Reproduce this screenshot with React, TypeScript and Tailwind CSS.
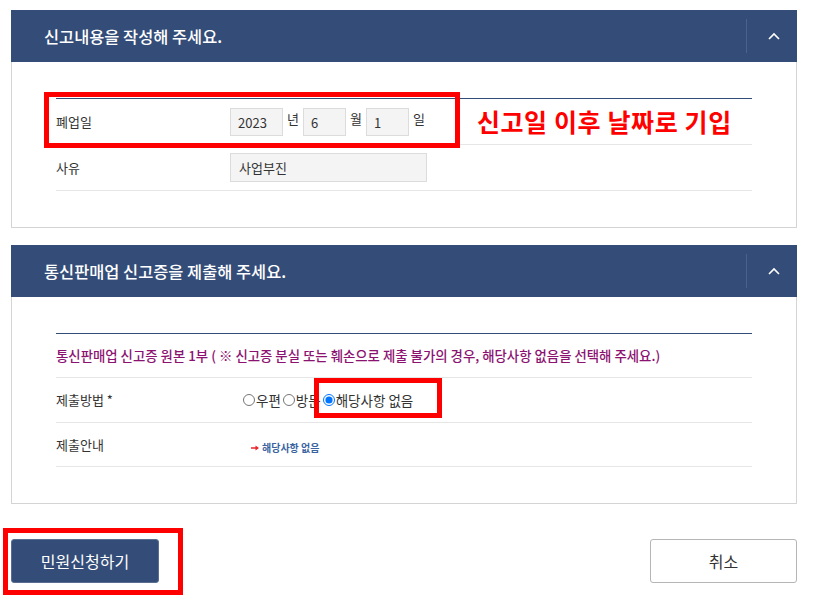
import React from 'react';

const navy = 'bg-[#344d78]';

function Chevron() {
  return (
    <svg width="12" height="8" viewBox="0 0 12 8" fill="none">
      <polyline points="1,7 6,2 11,7" stroke="#ffffff" strokeWidth="1.6" />
    </svg>
  );
}

function Panel({ title, children }: { title: string; children: React.ReactNode }) {
  return (
    <section className="w-[786px] ml-[11px]">
      <header className={`h-[52px] ${navy} flex items-center`}>
        <h2 className="flex-1 pl-[33px] text-[16.4px] font-medium text-white">
          {title}
        </h2>
        <div className="w-px h-[34px] bg-[#4b6291]" />
        <button className="w-[50px] h-full flex items-center justify-center pl-[3px]">
          <Chevron />
        </button>
      </header>
      <div className="border border-t-0 border-[#d4d4d4] pl-[44px] pr-[44px] py-[36px]">
        <div className="border-t border-[#344d78]">{children}</div>
      </div>
    </section>
  );
}

function Row({ label, h = 'h-[45px]', children }: { label: string; h?: string; children?: React.ReactNode }) {
  return (
    <div className={`${h} flex items-center border-b border-[#e6e6e6]`}>
      <div className="w-[174px] text-[13px] text-[#333]">{label}</div>
      <div className="flex items-center">{children}</div>
    </div>
  );
}

function Box({ value, w }: { value: string; w: string }) {
  return (
    <div className={`${w} h-[28px] bg-[#f4f4f4] border border-[#dcdcdc] flex items-center pl-[7px] pt-[2px] text-[13px] text-[#333]`}>
      {value}
    </div>
  );
}

export default function App() {
  return (
    <div className="relative w-[827px] h-[604px] bg-white pt-[10px] font-['Noto_Sans_CJK_KR','Noto_Sans',sans-serif]">
      <Panel title="신고내용을 작성해 주세요.">
        <Row label="폐업일" h="h-[46px]">
          <Box value="2023" w="w-[53px]" />
          <span className="mx-[4px] text-[13px] text-[#333] -mt-[6px]">년</span>
          <Box value="6" w="w-[43px]" />
          <span className="mx-[4px] text-[13px] text-[#333] -mt-[6px]">월</span>
          <Box value="1" w="w-[43px]" />
          <span className="ml-[4px] text-[13px] text-[#333] -mt-[6px]">일</span>
          <span className="ml-[52px] text-[25px] font-bold text-[#ff0000] tracking-[0.6px]">
            신고일 이후 날짜로 기입
          </span>
        </Row>
        <Row label="사유" h="h-[46px]">
          <div className="w-[197px] h-[29px] bg-[#f4f4f4] border border-[#dcdcdc] flex items-center pl-[8px] text-[13px] text-[#333]">
            사업부진
          </div>
        </Row>
      </Panel>

      <div className="h-[17px]" />

      <Panel title="통신판매업 신고증을 제출해 주세요.">
        <div className="h-[44px] flex items-center border-b border-[#e6e6e6] text-[13.4px] font-medium text-[#8b1271]">
          통신판매업 신고증 원본 1부 ( ※ 신고증 분실 또는 훼손으로 제출 불가의 경우, 해당사항 없음을 선택해 주세요.)
        </div>
        <Row label="제출방법 *">
          <div className="flex items-center pl-[13px] text-[13.5px] text-[#333]">
            <input type="radio" name="m" className="m-0 w-[12px] h-[12px]" />
            <span className="ml-[1px] mr-[2px]">우편</span>
            <input type="radio" name="m" className="m-0 w-[12px] h-[12px]" />
            <span className="ml-[1px] mr-[2px]">방문</span>
            <input type="radio" name="m" defaultChecked className="m-0 w-[12px] h-[12px]" />
            <span className="ml-[1px]">해당사항 없음</span>
          </div>
        </Row>
        <Row label="제출안내" h="h-[44px]">
          <div className="flex items-center pl-[21px] pt-[6px]">
            <svg width="8" height="6" viewBox="0 0 8 6" className="mr-[3px]">
              <path d="M0 2.3h4.5V0.5L8 3 4.5 5.5V3.7H0z" fill="#e8262b" />
            </svg>
            <span className="text-[10px] font-bold text-[#3a63a0]">해당사항 없음</span>
          </div>
        </Row>
      </Panel>

      <div className="mt-[35px] ml-[11px] w-[786px] flex justify-between">
        <button className={`w-[148px] h-[44px] rounded-[3px] ${navy} border border-[#5a6e92] text-white text-[16px]`}>
          민원신청하기
        </button>
        <button className="w-[147px] h-[44px] rounded-[3px] bg-white border border-[#b5b5b5] text-[#333] text-[16px]">
          취소
        </button>
      </div>

      {/* annotation boxes */}
      <div className="absolute left-[44px] top-[92px] w-[416px] h-[56px] border-[5px] border-[#ff0000]" />
      <div className="absolute left-[314px] top-[378px] w-[128px] h-[40px] border-[5px] border-[#ff0000]" />
      <div className="absolute left-[3px] top-[528px] w-[180px] h-[67px] border-[5px] border-[#ff0000]" />
    </div>
  );
}
